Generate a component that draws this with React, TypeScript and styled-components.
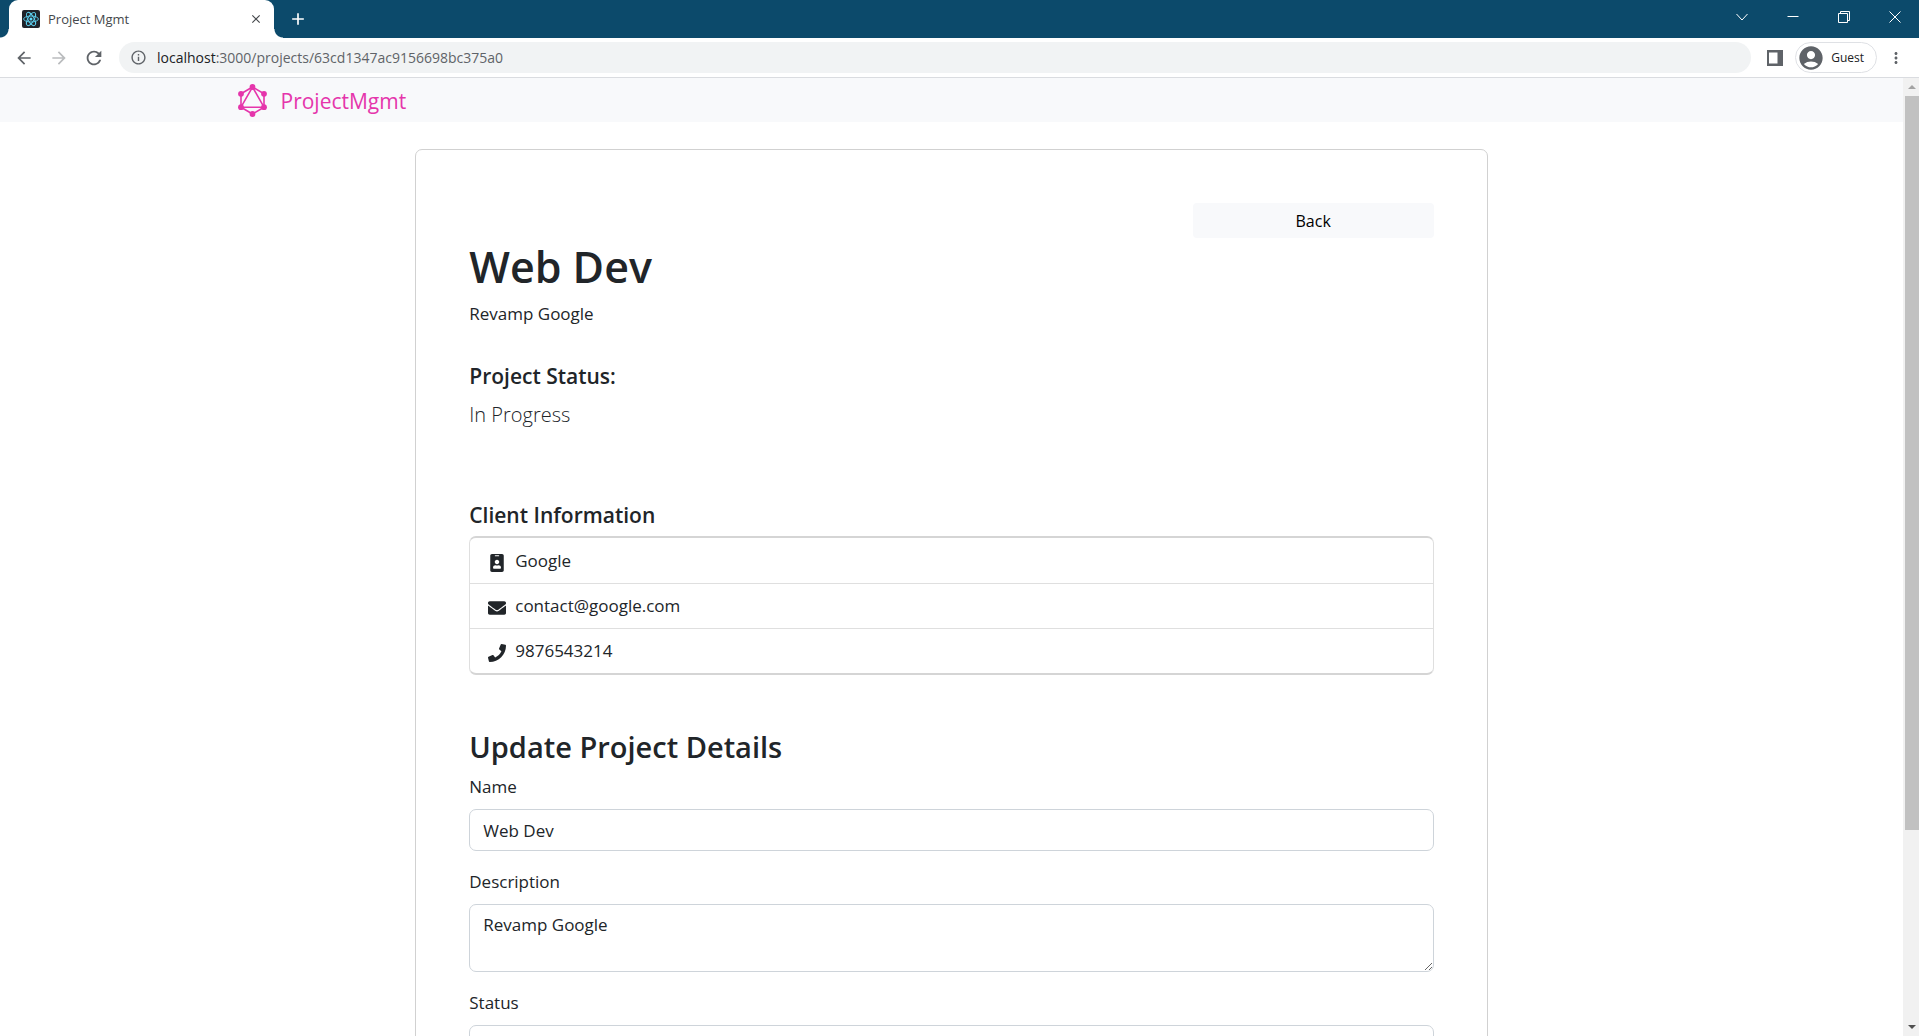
import React from "react";
import styled, { createGlobalStyle, css } from "styled-components";
import { FaEnvelope, FaIdBadge, FaPhone } from "react-icons/fa";
import { MdArrowBack, MdArrowForward, MdRefresh, MdInfoOutline, MdAccountCircle, MdMoreVert, MdClose, MdAdd } from "react-icons/md";

const sans = `"Open Sans", "Noto Sans", sans-serif`;

const GlobalStyle = createGlobalStyle`
  *, *::before, *::after { box-sizing: border-box; }
  body { margin: 0; background: #fff; color: #212529; font-family: ${sans}; font-size: 17px; line-height: 26px; }
  button, input, select, textarea { font: inherit; color: inherit; }
`;

const Browser = styled.div`
  display: flex;
  flex-direction: column;
  height: 100vh;
  overflow: hidden;
`;

const TabStrip = styled.header`
  display: flex;
  height: 38px;
  padding-left: 9px;
  background: #0c4a6b;
  color: #fff;
`;

const Tab = styled.div`
  position: relative;
  display: flex;
  align-items: center;
  gap: 8px;
  width: 265px;
  padding: 0 10px 0 13px;
  border-radius: 9px 9px 0 0;
  background: #fff;
  color: #45484c;
  font-size: 13px;
  line-height: 18px;
  &::before, &::after {
    content: "";
    position: absolute;
    bottom: 0;
    width: 9px;
    height: 9px;
  }
  &::before { left: -9px; background: radial-gradient(circle at 0 0, transparent 8px, #fff 9px); }
  &::after { right: -9px; background: radial-gradient(circle at 100% 0, transparent 8px, #fff 9px); }
`;

const TabTitle = styled.span`
  flex: 1;
`;

const IconButton = styled.button<{ $size?: number; $muted?: boolean }>`
  display: flex;
  align-items: center;
  justify-content: center;
  width: ${(p) => p.$size ?? 24}px;
  height: ${(p) => p.$size ?? 24}px;
  padding: 0;
  border: 0;
  background: none;
  color: ${(p) => (p.$muted ? "#babcbe" : "inherit")};
`;

const NewTab = styled(IconButton)`
  align-self: center;
  margin-left: 12px;
`;

const WindowControls = styled.div`
  display: flex;
  margin-left: auto;
`;

const WindowButton = styled.button`
  display: flex;
  align-items: center;
  justify-content: center;
  width: 51px;
  height: 33px;
  padding: 0 0 0 2px;
  border: 0;
  background: none;
  color: #fff;
`;

const Toolbar = styled.div`
  display: flex;
  align-items: center;
  gap: 11px;
  height: 40px;
  padding: 0 14px 0 12px;
  border-bottom: 1px solid #dadce0;
  background: #fff;
  color: #5f6368;
`;

const AddressBar = styled.div`
  display: flex;
  flex: 1;
  align-items: center;
  gap: 10px;
  height: 31px;
  margin: 0 1px 0 2px;
  padding: 0 11px;
  border-radius: 16px;
  background: #f1f3f4;
  font-size: 14px;
  line-height: 20px;
`;

const Host = styled.span`
  color: #202124;
`;

const Profile = styled.button`
  display: flex;
  align-items: center;
  gap: 6px;
  height: 31px;
  margin: 0 -1px 0 -3px;
  padding: 0 12px 0 1px;
  border: 1px solid #dfe1e5;
  border-radius: 16px;
  background: #fff;
  color: #5f6368;
  font-size: 12px;
`;

const Viewport = styled.div`
  display: flex;
  flex: 1;
  min-height: 0;
`;

const Page = styled.div`
  flex: 1;
  min-width: 0;
  overflow: hidden;
`;

const Scrollbar = styled.div`
  display: flex;
  flex-direction: column;
  width: 16px;
  padding-left: 2px;
  background: #f1f1f1;
`;

const ScrollArrow = styled.div<{ $up?: boolean }>`
  display: flex;
  align-items: center;
  justify-content: center;
  height: 18px;
  &::before {
    content: "";
    border: 4px solid transparent;
    ${(p) =>
      p.$up
        ? css`border-top-width: 0; border-bottom-color: #a3a3a3;`
        : css`border-bottom-width: 0; border-top-color: #505050;`}
  }
`;

const ScrollTrack = styled.div`
  display: flex;
  flex: 1;
  flex-direction: column;
  &::before { content: ""; flex: 39; background: #c1c1c1; }
  &::after { content: ""; flex: 10; }
`;

const Navbar = styled.nav`
  height: 44px;
  background: #f8f9fb;
`;

const Container = styled.div`
  max-width: 1456px;
  margin: 0 auto;
  padding: 0 13px;
`;

const Brand = styled.a`
  display: inline-flex;
  align-items: center;
  gap: 14px;
  height: 44px;
  padding: 1px 0 0 1px;
  color: #e535ab;
  font-size: 21px;
  text-decoration: none;
`;

const Card = styled.main`
  width: 75%;
  margin: 27px auto;
  padding: 53px;
  border: 1px solid #d1d1d1;
  border-radius: 7px;
`;

const BackButton = styled.a`
  display: block;
  width: 25%;
  height: 35px;
  margin-left: auto;
  border-radius: 4px;
  background: #f8f9fb;
  color: #000;
  font-size: 16px;
  line-height: 36px;
  text-align: center;
  text-decoration: none;
`;

const Title = styled.h1`
  margin: 0 0 6px;
  font-size: 43px;
  font-weight: 600;
  line-height: 57px;
`;

const Text = styled.p`
  margin: 0 0 18px;
`;

const Subtitle = styled.h2`
  margin: 0 0 8px;
  font-size: 21px;
  font-weight: 600;
  line-height: 26px;
`;

const Lead = styled.p`
  margin: 0;
  font-size: 20px;
  font-weight: 300;
  line-height: 35px;
`;

const Section = styled.section<{ $space: number }>`
  margin-top: ${(p) => p.$space}px;
`;

const ClientList = styled.ul`
  margin: 0;
  padding: 0;
  border: 1px solid #dfdfdf;
  border-top: 2px solid #d5d5d5;
  border-bottom: 2px solid #d5d5d5;
  border-radius: 7px;
  list-style: none;
`;

const ClientItem = styled.li`
  display: flex;
  align-items: center;
  gap: 9px;
  height: 45px;
  padding: 0 18px;
  & + & { border-top: 1px solid #dfdfdf; }
  svg { margin-top: 4px; }
`;

const FormTitle = styled.h3`
  margin: 0 0 9px;
  font-size: 29px;
  font-weight: 600;
  line-height: 37px;
`;

const Field = styled.div`
  margin-bottom: 18px;
`;

const Label = styled.label`
  display: block;
  margin-bottom: 9px;
`;

const control = css`
  display: block;
  width: 100%;
  padding: 7px 13px;
  border: 1px solid #ced4da;
  border-radius: 7px;
  background: #fff;
`;

const Input = styled.input`
  ${control}
  height: 42px;
`;

const TextArea = styled.textarea`
  ${control}
  height: 68px;
  resize: vertical;
`;

const Select = styled.select`
  ${control}
  height: 42px;
  appearance: none;
`;

const ReactIcon = () => (
  <svg width="18" height="18" viewBox="0 0 18 18" aria-hidden="true">
    <rect width="18" height="18" rx="2" fill="#20232a" />
    <g fill="none" stroke="#5ccfee" strokeWidth="0.9">
      {[0, 60, 120].map((a) => (
        <ellipse key={a} cx="9" cy="9" rx="7.4" ry="3" transform={`rotate(${a} 9 9)`} />
      ))}
    </g>
    <circle cx="9" cy="9" r="1.5" fill="#61dafb" />
  </svg>
);

const nodes = [[14.5, 3], [26, 9.8], [26, 23.2], [14.5, 30], [3, 23.2], [3, 9.8]];

const GraphLogo = () => (
  <svg width="29" height="33" viewBox="0 0 29 33" aria-hidden="true">
    <g fill="none" stroke="#e535ab" strokeWidth="1.6">
      <polygon points={nodes.map((n) => n.join(",")).join(" ")} />
      <polygon points="14.5,3 26,23.2 3,23.2" />
    </g>
    {nodes.map(([x, y]) => (
      <circle key={`${x}-${y}`} cx={x} cy={y} r="2.9" fill="#e535ab" />
    ))}
  </svg>
);

const Glyph = ({ d }: { d: string }) => (
  <svg width="12" height="12" viewBox="0 0 12 12" fill="none" stroke="currentColor" aria-hidden="true">
    <path d={d} />
  </svg>
);

const windowGlyphs = [
  { label: "Search tabs", d: "M0.5 3 6 9 11.5 3" },
  { label: "Minimize", d: "M0.5 5.5H11.5" },
  { label: "Restore", d: "M0.5 2.5H9.5V11.5H0.5ZM2.5 2.5V0.5H11.5V9.5H9.5" },
  { label: "Close", d: "M0.5 0.5 11.5 11.5M11.5 0.5 0.5 11.5" },
];

const client = [
  { icon: <FaIdBadge size={18} />, text: "Google" },
  { icon: <FaEnvelope size={18} />, text: "contact@google.com" },
  { icon: <FaPhone size={18} />, text: "9876543214" },
];

export default function App() {
  return (
    <Browser>
      <GlobalStyle />
      <TabStrip>
        <Tab>
          <ReactIcon />
          <TabTitle>Project Mgmt</TabTitle>
          <IconButton $size={16} aria-label="Close tab"><MdClose size={14} /></IconButton>
        </Tab>
        <NewTab aria-label="New tab"><MdAdd size={20} /></NewTab>
        <WindowControls>
          {windowGlyphs.map((g) => (
            <WindowButton key={g.label} aria-label={g.label}><Glyph d={g.d} /></WindowButton>
          ))}
        </WindowControls>
      </TabStrip>
      <Toolbar>
        <IconButton aria-label="Back"><MdArrowBack size={20} /></IconButton>
        <IconButton $muted aria-label="Forward"><MdArrowForward size={20} /></IconButton>
        <IconButton aria-label="Reload"><MdRefresh size={22} /></IconButton>
        <AddressBar>
          <MdInfoOutline size={17} />
          <span><Host>localhost</Host>:3000/projects/63cd1347ac9156698bc375a0</span>
        </AddressBar>
        <IconButton aria-label="Side panel">
          <svg width="16" height="16" viewBox="0 0 16 16" aria-hidden="true">
            <path d="M0 0H16V16H0ZM2 2.5V13.5H10.5V2.5Z" fill="currentColor" fillRule="evenodd" />
          </svg>
        </IconButton>
        <Profile><MdAccountCircle size={28} /><Host>Guest</Host></Profile>
        <IconButton $size={18} aria-label="Menu"><MdMoreVert size={20} /></IconButton>
      </Toolbar>
      <Viewport>
        <Page>
          <Navbar>
            <Container>
              <Brand href="#"><GraphLogo />ProjectMgmt</Brand>
            </Container>
          </Navbar>
          <Container>
            <Card>
              <BackButton href="#">Back</BackButton>
              <Title>Web Dev</Title>
              <Text>Revamp Google</Text>
              <Section $space={36}>
                <Subtitle>Project Status:</Subtitle>
                <Lead>In Progress</Lead>
              </Section>
              <Section $space={70}>
                <Subtitle>Client Information</Subtitle>
                <ClientList>
                  {client.map((c) => (
                    <ClientItem key={c.text}>{c.icon}{c.text}</ClientItem>
                  ))}
                </ClientList>
              </Section>
              <Section $space={53}>
                <FormTitle>Update Project Details</FormTitle>
                <form>
                  <Field>
                    <Label htmlFor="name">Name</Label>
                    <Input id="name" defaultValue="Web Dev" />
                  </Field>
                  <Field>
                    <Label htmlFor="description">Description</Label>
                    <TextArea id="description" defaultValue="Revamp Google" />
                  </Field>
                  <Field>
                    <Label htmlFor="status">Status</Label>
                    <Select id="status" defaultValue="progress">
                      <option value="new">Not Started</option>
                      <option value="progress">In Progress</option>
                      <option value="completed">Completed</option>
                    </Select>
                  </Field>
                </form>
              </Section>
            </Card>
          </Container>
        </Page>
        <Scrollbar>
          <ScrollArrow $up />
          <ScrollTrack />
          <ScrollArrow />
        </Scrollbar>
      </Viewport>
    </Browser>
  );
}
